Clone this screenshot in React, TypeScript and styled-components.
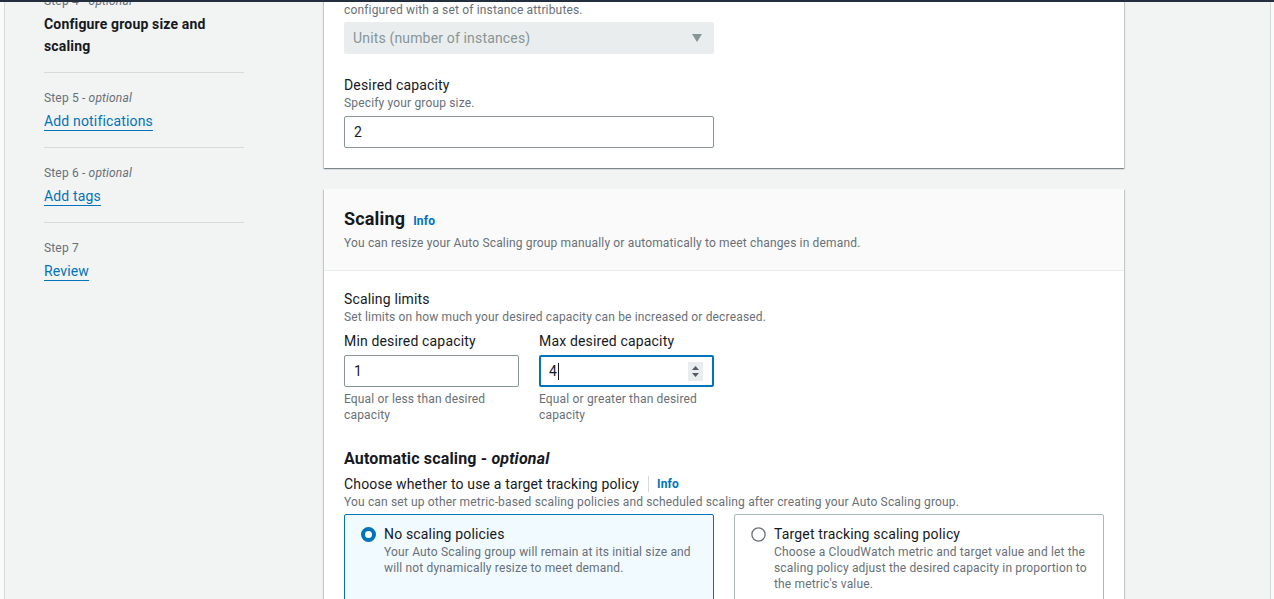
import React from "react";
import styled, { createGlobalStyle } from "styled-components";

const Global = createGlobalStyle`
  html, body { margin: 0; padding: 0; }
  body {
    background: #f2f3f3;
    font-family: Roboto, "Liberation Sans", Arial, sans-serif;
    letter-spacing: 0.01em;
    color: #16191f;
    overflow: hidden;
  }
  * { box-sizing: border-box; }
`;

const Frame = styled.div`
  height: 599px;
  display: flex;
  border-top: 2px solid #232f3e;
  overflow: hidden;
`;

const LeftEdge = styled.div`
  width: 5px;
  flex: none;
  background: #fafafa;
  border-right: 1px solid #d5dbdb;
`;

const Nav = styled.nav`
  width: 239px;
  flex: none;
  padding-left: 39px;
  margin-top: -9px;
  display: flex;
  flex-direction: column;
`;

const NavStep = styled.div<{ $first?: boolean }>`
  display: flex;
  flex-direction: column;
  gap: 4px;
  padding: ${(p) => (p.$first ? "0 0 15px" : "17px 0 15px")};
  border-bottom: 1px solid #d5dbdb;
  &:last-child { border-bottom: none; }
`;

const StepLabel = styled.div`
  font-size: 12px;
  line-height: 16px;
  color: #687078;
  em { font-style: italic; }
`;

const StepCurrent = styled.div`
  font-size: 14px;
  line-height: 22px;
  font-weight: 700;
  color: #16191f;
`;

const StepLink = styled.a`
  font-size: 14px;
  line-height: 22px;
  color: #0073bb;
  text-decoration: underline;
  text-underline-offset: 4px;
  text-decoration-thickness: 1px;
  align-self: flex-start;
`;

const Main = styled.main`
  width: 800px;
  flex: none;
  margin-left: 80px;
  display: flex;
  flex-direction: column;
  gap: 21px;
`;

const Card = styled.section<{ $clipTop?: boolean }>`
  background: #fff;
  box-shadow: 0 1px 1px 0 rgba(0, 28, 36, 0.3), 1px 1px 1px 0 rgba(0, 28, 36, 0.15),
    -1px 1px 1px 0 rgba(0, 28, 36, 0.15);
  margin-top: ${(p) => (p.$clipTop ? "-16px" : "0")};
`;

const CardBody = styled.div<{ $top?: number }>`
  padding: ${(p) => p.$top ?? 18}px 20px 20px;
  display: flex;
  flex-direction: column;
`;

const CardHeader = styled.header`
  background: #fafafa;
  border-bottom: 1px solid #eaeded;
  padding: 19px 20px 19px;
  display: flex;
  flex-direction: column;
  gap: 3px;
`;

const Title = styled.h2`
  margin: 0;
  font-size: 18px;
  line-height: 22px;
  font-weight: 700;
  display: flex;
  align-items: baseline;
  gap: 8px;
`;

const Info = styled.a`
  font-size: 12px;
  font-weight: 700;
  color: #0073bb;
  text-decoration: none;
`;

const Desc = styled.div<{ $gap?: number }>`
  font-size: 12px;
  line-height: 16px;
  color: #687078;
  margin-bottom: ${(p) => p.$gap ?? 0}px;
`;

const Label = styled.div<{ $top?: number }>`
  font-size: 14px;
  line-height: 20px;
  color: #16191f;
  margin-top: ${(p) => p.$top ?? 0}px;
  display: flex;
  align-items: center;
`;

const Divider = styled.span`
  width: 1px;
  height: 16px;
  background: #d5dbdb;
  margin: 0 8px 0 9px;
`;

const SubHeading = styled.h3`
  margin: 26px 0 5px;
  font-size: 16px;
  line-height: 20px;
  font-weight: 700;
  em { font-style: italic; }
`;

const Select = styled.div`
  width: 370px;
  height: 32px;
  background: #eaeded;
  border-radius: 2px;
  display: flex;
  align-items: center;
  justify-content: space-between;
  padding: 0 12px 0 9px;
  font-size: 14px;
  color: #879596;
`;

const Caret = styled.span`
  width: 0;
  height: 0;
  border-left: 5px solid transparent;
  border-right: 5px solid transparent;
  border-top: 8px solid #879596;
`;

const Input = styled.div<{ $width: number; $focused?: boolean }>`
  width: ${(p) => p.$width}px;
  height: 32px;
  border: ${(p) => (p.$focused ? "2px solid #0073bb" : "1px solid #879596")};
  border-radius: 2px;
  background: #fff;
  display: flex;
  align-items: center;
  padding: 0 ${(p) => (p.$focused ? 9 : 10)}px 0 ${(p) => (p.$focused ? 8 : 9)}px;
  font-size: 14px;
  color: #16191f;
`;

const TextCursor = styled.span`
  width: 1px;
  height: 17px;
  background: #16191f;
  margin-left: 1px;
`;

const Spinner = styled.span`
  margin-left: auto;
  width: 15px;
  height: 19px;
  background: #eaeded;
  display: flex;
  align-items: center;
  justify-content: center;
`;

const FieldRow = styled.div`
  display: flex;
  gap: 20px;
  margin-top: 6px;
`;

const Field = styled.div`
  width: 175px;
  display: flex;
  flex-direction: column;
  gap: 4px;
`;

const Hint = styled.div`
  font-size: 12px;
  line-height: 16px;
  color: #687078;
`;

const Tiles = styled.div`
  display: flex;
  gap: 20px;
  margin-top: 4px;
`;

const Tile = styled.div<{ $selected?: boolean }>`
  width: 370px;
  height: 110px;
  border: 1px solid ${(p) => (p.$selected ? "#0073bb" : "#aab7b8")};
  background: ${(p) => (p.$selected ? "#f1faff" : "#fff")};
  border-radius: 2px;
  padding: 9px 16px 0 16px;
  display: flex;
  gap: 8px;
`;

const RadioWrap = styled.span`
  flex: none;
  height: 20px;
  display: flex;
  align-items: center;
`;

const TileText = styled.div`
  display: flex;
  flex-direction: column;
`;

const TileTitle = styled.div`
  font-size: 14px;
  line-height: 20px;
`;

const RightStrip = styled.div`
  margin-left: auto;
  width: 4px;
  flex: none;
  background: #fafafa;
  border-left: 1px solid #d5dbdb;
`;

const Radio = ({ checked }: { checked?: boolean }) =>
  checked ? (
    <svg width="15" height="15" viewBox="0 0 15 15">
      <circle cx="7.5" cy="7.5" r="5.5" fill="#fff" stroke="#0073bb" strokeWidth="4" />
    </svg>
  ) : (
    <svg width="15" height="15" viewBox="0 0 15 15">
      <circle cx="7.5" cy="7.5" r="6.6" fill="#fff" stroke="#687078" strokeWidth="1.3" />
    </svg>
  );

export default function App() {
  return (
    <>
      <Global />
      <Frame>
        <LeftEdge />
        <Nav>
          <NavStep $first>
            <StepLabel>
              Step 4 - <em>optional</em>
            </StepLabel>
            <StepCurrent>Configure group size and scaling</StepCurrent>
          </NavStep>
          <NavStep>
            <StepLabel>
              Step 5 - <em>optional</em>
            </StepLabel>
            <StepLink>Add notifications</StepLink>
          </NavStep>
          <NavStep>
            <StepLabel>
              Step 6 - <em>optional</em>
            </StepLabel>
            <StepLink>Add tags</StepLink>
          </NavStep>
          <NavStep>
            <StepLabel>Step 7</StepLabel>
            <StepLink>Review</StepLink>
          </NavStep>
        </Nav>
        <Main>
          <Card $clipTop>
            <CardBody $top={0}>
              <Desc>Choose the unit of measurement for the desired capacity value. vCPUs and Memory(GiB) are supported for mixed instances groups</Desc>
              <Desc $gap={4}>configured with a set of instance attributes.</Desc>
              <Select>
                Units (number of instances)
                <Caret />
              </Select>
              <Label $top={21}>Desired capacity</Label>
              <Desc $gap={5}>Specify your group size.</Desc>
              <Input $width={370}>2</Input>
            </CardBody>
          </Card>
          <Card>
            <CardHeader>
              <Title>
                Scaling <Info>Info</Info>
              </Title>
              <Desc>You can resize your Auto Scaling group manually or automatically to meet changes in demand.</Desc>
            </CardHeader>
            <CardBody>
              <Label>Scaling limits</Label>
              <Desc>Set limits on how much your desired capacity can be increased or decreased.</Desc>
              <FieldRow>
                <Field>
                  <Label>Min desired capacity</Label>
                  <Input $width={175}>1</Input>
                  <Hint>Equal or less than desired capacity</Hint>
                </Field>
                <Field>
                  <Label>Max desired capacity</Label>
                  <Input $width={175} $focused>
                    4<TextCursor />
                    <Spinner>
                      <svg width="9" height="13" viewBox="0 0 9 13">
                        <path d="M4.5 1 L8 5 L1 5 Z" fill="#545b64" />
                        <path d="M4.5 12 L8 8 L1 8 Z" fill="#545b64" />
                      </svg>
                    </Spinner>
                  </Input>
                  <Hint>Equal or greater than desired capacity</Hint>
                </Field>
              </FieldRow>
              <SubHeading>
                Automatic scaling - <em>optional</em>
              </SubHeading>
              <Label>
                Choose whether to use a target tracking policy
                <Divider />
                <Info>Info</Info>
              </Label>
              <Desc>
                You can set up other metric-based scaling policies and scheduled scaling after creating your Auto Scaling group.
              </Desc>
              <Tiles>
                <Tile $selected>
                  <RadioWrap>
                    <Radio checked />
                  </RadioWrap>
                  <TileText>
                    <TileTitle>No scaling policies</TileTitle>
                    <Desc>
                      Your Auto Scaling group will remain at its initial size and will not dynamically resize to meet demand.
                    </Desc>
                  </TileText>
                </Tile>
                <Tile>
                  <RadioWrap>
                    <Radio />
                  </RadioWrap>
                  <TileText>
                    <TileTitle>Target tracking scaling policy</TileTitle>
                    <Desc>
                      Choose a CloudWatch metric and target value and let the scaling policy adjust the desired capacity in proportion to the metric's value.
                    </Desc>
                  </TileText>
                </Tile>
              </Tiles>
            </CardBody>
          </Card>
        </Main>
        <RightStrip />
      </Frame>
    </>
  );
}
